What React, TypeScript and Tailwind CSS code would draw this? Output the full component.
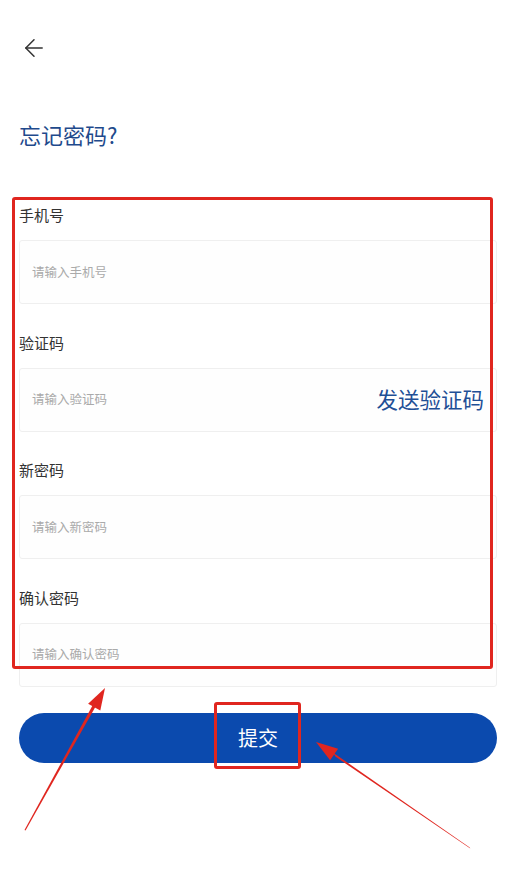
import { ArrowLeft } from "lucide-react"

const fields = [
  { label: "手机号", placeholder: "请输入手机号" },
  { label: "验证码", placeholder: "请输入验证码", action: "发送验证码" },
  { label: "新密码", placeholder: "请输入新密码" },
  { label: "确认密码", placeholder: "请输入确认密码" },
]

function Annotations() {
  return (
    <>
      <div className="absolute left-[12px] top-[197px] w-[481px] h-[472px] border-[3px] border-[#e0261f] rounded-[3px] pointer-events-none" />
      <div className="absolute left-[214px] top-[702px] w-[87px] h-[67px] border-[3px] border-[#e0261f] rounded-[3px] pointer-events-none" />
      <svg className="absolute left-0 top-0 pointer-events-none" width="516" height="896" viewBox="0 0 516 896">
        {/* left arrow */}
        <polygon points="24.5,830 25.5,830.6 95.6,706.5 92.8,704.9" fill="#e0261f" />
        <polygon points="105,688 100.3,710.5 88.1,703.7" fill="#e0261f" />
        {/* right arrow */}
        <polygon points="470.3,848.5 469.7,847.5 332.5,752.2 335.7,756.8" fill="#e0261f" />
        <polygon points="316,742 338.1,748.7 330.1,760.3" fill="#e0261f" />
      </svg>
    </>
  )
}

export default function App() {
  return (
    <div
      className="relative w-[516px] h-[896px] bg-white overflow-hidden"
      style={{ fontFamily: '"Noto Sans CJK SC", "Noto Sans", sans-serif' }}
    >
      <div className="px-[19px]">
        <div className="pt-[34px] h-[60px]">
          <ArrowLeft className="text-[#333333] ml-[1px]" size={28} strokeWidth={1.3} />
        </div>
        <h1 className="mt-[59px] text-[22px] leading-[30px] text-[#1f4a8c]">忘记密码?</h1>

        <div className="mt-[54px] flex flex-col gap-[26.5px]">
          {fields.map((f) => (
            <div key={f.label}>
              <div className="h-6 leading-6 text-[15px] text-[#333333]">{f.label}</div>
              <div className="mt-[13px] h-16 flex items-center justify-between border border-[#efefef] rounded-[3px] bg-[#fefefe] pl-3 pr-3">
                <span className="text-[12.5px] text-[#aaaaaa]">{f.placeholder}</span>
                {f.action && <span className="text-[21.5px] text-[#1f4f96]">{f.action}</span>}
              </div>
            </div>
          ))}
        </div>

        <button className="mt-[26px] w-full h-[50px] rounded-full bg-[#0b4aae] text-white text-[20px]">
          提交
        </button>
      </div>

      <Annotations />
    </div>
  )
}
